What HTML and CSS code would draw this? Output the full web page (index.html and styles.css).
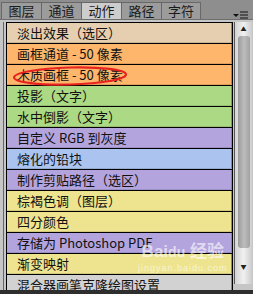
FILE: index.html
```html
<!DOCTYPE html>
<html lang="zh-CN">
<head>
    <meta charset="UTF-8">
    <title>动作</title>
    <link rel="stylesheet" href="styles.css">
</head>
<body>
    <div class="tabs">
        <div class="tab">图层</div>
        <div class="tab">通道</div>
        <div class="tab active">动作</div>
        <div class="tab">路径</div>
        <div class="tab last">字符</div>
        <div class="menu-btn">
            <svg width="16" height="10" viewBox="0 0 16 10">
                <path d="M0 3h6l-3 3z" fill="#111"/>
                <path d="M7 1h8M7 4h8M7 7h8M7 9.5h8" stroke="#111" stroke-width="1.2"/>
            </svg>
        </div>
    </div>
    <div class="panel">
        <div class="frame">
            <div class="list">
                <div class="row tan">淡出效果（选区）</div>
                <div class="row orange">画框通道 - 50 像素</div>
                <div class="row orange">木质画框 - 50 像素</div>
                <div class="row green">投影（文字）</div>
                <div class="row green">水中倒影（文字）</div>
                <div class="row purple">自定义 RGB 到灰度</div>
                <div class="row blue">熔化的铅块</div>
                <div class="row purple">制作剪贴路径（选区）</div>
                <div class="row yellow">棕褐色调（图层）</div>
                <div class="row yellow">四分颜色</div>
                <div class="row purple">存储为 Photoshop PDF</div>
                <div class="row yellow">渐变映射</div>
                <div class="row gray">混合器画笔克隆绘图设置</div>
            </div>
        </div>
        <div class="scrollbar">
            <div class="arrow">▲</div>
            <div class="thumb"></div>
            <div class="arrow down">▼</div>
        </div>
    </div>
    <div class="footer"></div>

    <svg class="circle" width="120" height="24" viewBox="0 0 120 24">
        <ellipse cx="60" cy="12" rx="56" ry="8.5" fill="none" stroke="#e8231f" stroke-width="2.2" transform="rotate(-1.5 60 12)"/>
    </svg>

    <div class="watermark">
        <div class="wm-logo">Bai<span class="paw">du</span> 经验</div>
        <div class="wm-url">jingyan.baidu.com</div>
    </div>
</body>
</html>
```

FILE: styles.css
```css
body {
    margin: 0;
    width: 253px;
    height: 294px;
    overflow: hidden;
    background-color: #c4c4c4;
    font-family: "Noto Sans CJK SC", "Liberation Sans", sans-serif;
    font-size: 13px;
    color: #111;
    position: relative;
    display: flex;
    flex-direction: column;
}
.tabs {
    display: flex;
    flex: none;
    height: 19px;
    background-color: #8e8e8e;
    border-bottom: 1px solid #6e6e6e;
    padding-left: 1px;
}
.tab {
    width: 40px;
    margin-top: 2px;
    border-left: 1px solid #686868;
    border-top: 1px solid #686868;
    background-color: #9c9c9c;
    text-align: center;
    line-height: 16px;
    color: #1a1a1a;
    box-sizing: border-box;
}
.tab.last {
    border-right: 1px solid #686868;
}
.tab.active {
    background-color: #cdcdcd;
}
.menu-btn {
    margin-left: auto;
    padding: 6px 4px 0 0;
}
.panel {
    display: flex;
    flex: 1;
    min-height: 0;
    padding: 2px 1px 0 3px;
    background-color: #c6c6c6;
}
.frame {
    border-left: 1px solid #666;
    padding-left: 2px;
}
.list {
    width: 225px;
    height: 100%;
    border: 1px solid #000;
    border-bottom: none;
    display: flex;
    flex-direction: column;
    gap: 1px;
    background-color: #000;
    overflow: hidden;
}
.row {
    flex: none;
    height: 20px;
    line-height: 19px;
    padding-left: 10px;
    white-space: nowrap;
    box-sizing: border-box;
    border-right: 1px solid #8a8a8a;
    border-bottom: 1px solid rgba(0, 0, 0, 0.12);
}
.tan { background-color: #e6cfb0; }
.orange { background-color: #fdb66b; }
.green { background-color: #acd983; }
.purple { background-color: #b3a4dd; }
.blue { background-color: #aac4ef; }
.yellow { background-color: #eee48f; }
.gray { background-color: #d2d2d2; }
.scrollbar {
    width: 17px;
    margin-left: 1px;
    margin-bottom: 6px;
    border-left: 1px solid #5a5a5a;
    background: linear-gradient(to right, #d4d4d4, #f0f0f0 50%, #cdcdcd);
    display: flex;
    flex-direction: column;
    align-items: center;
}
.arrow {
    font-size: 6px;
    height: 13px;
    line-height: 13px;
    color: #222;
}
.arrow.down {
    height: 30px;
    line-height: 26px;
}
.thumb {
    width: 12px;
    flex: 1;
    margin: 1px 0 6px 1px;
    border-radius: 3px;
    background: linear-gradient(to right, #9a9a9a, #bdbdbd 50%, #a2a2a2);
}
.footer {
    flex: none;
    height: 4px;
    background-color: #2e2e2e;
}
.circle {
    position: absolute;
    left: 10px;
    top: 64px;
}
.watermark {
    position: absolute;
    left: 138px;
    top: 242px;
    color: rgba(255, 255, 255, 0.6);
    text-align: center;
}
.wm-logo {
    font-family: "Liberation Sans", "Noto Sans CJK SC", sans-serif;
    font-weight: bold;
    font-size: 17px;
    line-height: 20px;
}
.paw {
    font-size: 14px;
}
.wm-url {
    font-family: "Liberation Sans", sans-serif;
    font-size: 9px;
    letter-spacing: 1px;
    line-height: 12px;
}
```
